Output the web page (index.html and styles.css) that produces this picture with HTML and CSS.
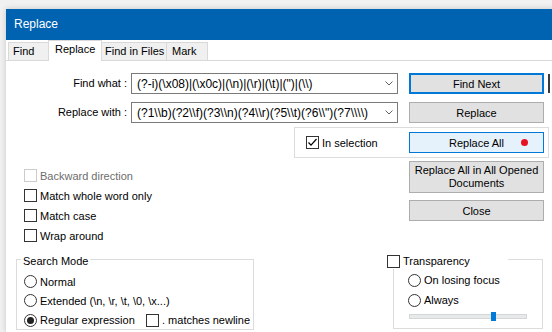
FILE: index.html
```html
<!DOCTYPE html>
<html lang="en">
<head>
<meta charset="UTF-8" />
<meta name="viewport" content="width=device-width, initial-scale=1" />
<title>Replace</title>
<link rel="stylesheet" href="styles.css">
</head>
<body>

<div class="window">
  <div class="titlebar">Replace</div>

  <div class="tabs">
    <div class="tab tab-find">Find</div>
    <div class="tab tab-replace active">Replace</div>
    <div class="tab tab-files">Find in Files</div>
    <div class="tab tab-mark">Mark</div>
  </div>

  <div class="panel">
    <div class="row">
      <span class="label">Find what :</span>
      <div class="combo">
        <span class="combo-text">(?-i)(\x08)|(\x0c)|(\n)|(\r)|(\t)|(")|(\\)</span>
        <svg class="chevron" viewBox="0 0 8 5"><polyline points="0.5,0.5 4,4 7.5,0.5" /></svg>
      </div>
      <button class="btn default">Find Next</button>
      <span class="swap"></span>
    </div>

    <div class="row row-second">
      <span class="label">Replace with :</span>
      <div class="combo">
        <span class="combo-text">(?1\\b)(?2\\f)(?3\\n)(?4\\r)(?5\\t)(?6\\")(?7\\\\)</span>
        <svg class="chevron" viewBox="0 0 8 5"><polyline points="0.5,0.5 4,4 7.5,0.5" /></svg>
      </div>
      <button class="btn">Replace</button>
    </div>

    <div class="selection-box">
      <label class="check in-selection">
        <span class="box"><svg viewBox="0 0 11 11"><polyline points="1.5,5.5 4,8.2 9.5,2" /></svg></span>
        In selection
      </label>
      <button class="btn hot">Replace All<span class="dot"></span></button>
    </div>

    <div class="middle">
      <div class="options">
        <label class="check disabled"><span class="box"></span>Backward direction</label>
        <label class="check"><span class="box"></span>Match whole word only</label>
        <label class="check"><span class="box"></span>Match case</label>
        <label class="check"><span class="box"></span>Wrap around</label>
      </div>
      <div class="actions">
        <button class="btn tall">Replace All in All Opened<br>Documents</button>
        <button class="btn">Close</button>
      </div>
    </div>

    <div class="bottom">
      <div class="group search-mode">
        <span class="group-title">Search Mode</span>
        <label class="radio"><span class="circle"></span>Normal</label>
        <label class="radio"><span class="circle"></span>Extended (\n, \r, \t, \0, \x...)</label>
        <div class="radio-line">
          <label class="radio regex"><span class="circle on"></span>Regular expression</label>
          <label class="check"><span class="box"></span>. matches newline</label>
        </div>
      </div>

      <div class="group transparency">
        <label class="check group-title trans-title"><span class="box"></span>Transparency</label>
        <label class="radio"><span class="circle"></span>On losing focus</label>
        <label class="radio"><span class="circle"></span>Always</label>
        <div class="slider"><span class="thumb"></span></div>
      </div>
    </div>
  </div>
</div>

</body>
</html>
```

FILE: styles.css
```css
body {
  margin: 0;
  background: #f1f1f1;
  font-family: "Liberation Sans", Arial, sans-serif;
  font-size: 11px;
  color: #000;
  overflow: hidden;
}
.window {
  margin: 9px 0 0 6px;
  width: 560px;
  height: 323px;
  overflow: hidden;
  background: #fff;
  box-shadow: 0 0 6px rgba(0,0,0,0.18);
}
.titlebar {
  height: 31px;
  line-height: 31px;
  padding-left: 8px;
  background: #0063b1;
  color: #fff;
  font-size: 12px;
}

/* tabs */
.tabs {
  display: flex;
  align-items: flex-end;
  height: 21px;
  box-sizing: border-box;
  padding-left: 3px;
  border-bottom: 1px solid #d9d9d9;
}
.tab {
  height: 18px;
  box-sizing: border-box;
  margin-left: -1px;
  padding-left: 4px;
  border: 1px solid #d9d9d9;
  border-bottom: none;
  background: #f0f0f0;
  line-height: 17px;
}
.tab-find { width: 41px; }
.tab-replace { width: 54px; padding-left: 6px; }
.tab-files { width: 66px; padding-left: 3px; }
.tab-mark { width: 42px; padding-left: 5px; }
.tab.active {
  position: relative;
  z-index: 1;
  height: 21px;
  margin-bottom: -1px;
  background: #fff;
}

/* main area */
.panel {
  padding-top: 12px;
}
.row {
  display: flex;
  align-items: flex-start;
  height: 21px;
}
.row-second {
  margin-top: 8px;
}
.label {
  width: 121px;
  margin-right: 4px;
  text-align: right;
  line-height: 21px;
  white-space: nowrap;
}
.combo {
  display: flex;
  align-items: center;
  width: 267px;
  height: 21px;
  box-sizing: border-box;
  padding-left: 5px;
  border: 1px solid #7a7a7a;
  overflow: hidden;
}
.combo-text {
  flex: 1;
  font-size: 12px;
  white-space: nowrap;
  overflow: hidden;
}
.chevron {
  flex: none;
  width: 8px;
  height: 5px;
  margin-right: 4px;
  fill: none;
  stroke: #606060;
  stroke-width: 1;
}
.btn {
  position: relative;
  width: 135px;
  height: 21px;
  box-sizing: border-box;
  margin: 0;
  padding: 0;
  font: inherit;
  color: #000;
  background: #e1e1e1;
  border: 1px solid #adadad;
}
.row .btn {
  margin-left: 11px;
}
.btn.default {
  border: 2px solid #0078d7;
}
.btn.hot {
  background: #e5f1fb;
  border-color: #0078d7;
}
.btn.tall {
  height: 32px;
  line-height: 13px;
}
.dot {
  position: absolute;
  right: 15px;
  top: 6px;
  width: 7px;
  height: 7px;
  border-radius: 50%;
  background: #e81123;
}
.swap {
  width: 14px;
  height: 19px;
  margin: 1px 0 0 4px;
  border-left: 2px solid #3a3a3a;
}

.selection-box {
  display: flex;
  align-items: center;
  width: 255px;
  height: 31px;
  box-sizing: border-box;
  margin: 4px 0 0 288px;
  padding-left: 11px;
  border: 1px solid #dcdcdc;
}
.in-selection {
  width: 103px;
}

/* checkboxes and radios */
.check,
.radio {
  display: flex;
  align-items: center;
  gap: 3px;
  height: 20px;
  white-space: nowrap;
}
.box,
.circle {
  display: flex;
  align-items: center;
  justify-content: center;
  flex: none;
  width: 13px;
  height: 13px;
  box-sizing: border-box;
  border: 1px solid #333;
  background: #fff;
}
.circle {
  border-radius: 50%;
}
.circle.on::after {
  content: "";
  width: 7px;
  height: 7px;
  border-radius: 50%;
  background: #222;
}
.box svg {
  width: 11px;
  height: 11px;
  fill: none;
  stroke: #000;
  stroke-width: 1.2;
}
.check.disabled {
  color: #6d6d6d;
}
.check.disabled .box {
  border-color: #cccccc;
}

.middle {
  display: flex;
  align-items: flex-start;
}
.options {
  width: 403px;
  box-sizing: border-box;
  margin-top: 8px;
  padding-left: 18px;
}
.options .check {
  align-items: flex-start;
  line-height: 20px;
}
.options .box {
  margin-top: 3px;
}
.actions {
  display: flex;
  flex-direction: column;
  gap: 7px;
  margin-top: 3px;
}

/* group boxes */
.bottom {
  display: flex;
  align-items: flex-start;
  margin-top: 13px;
}
.group {
  position: relative;
  box-sizing: border-box;
  border: 1px solid #dcdcdc;
}
.group-title {
  position: absolute;
  top: -7px;
  left: 4px;
  padding: 0 2px;
  height: 16px;
  line-height: 16px;
  background: #fff;
}
.search-mode {
  width: 238px;
  height: 71px;
  margin-left: 10px;
  padding: 12px 0 0 7px;
}
.search-mode .radio {
  height: 19px;
}
.radio-line {
  display: flex;
  align-items: center;
}
.regex {
  width: 122px;
}
.transparency {
  width: 150px;
  height: 70px;
  margin-left: 139px;
  padding: 10px 0 0 14px;
}
.trans-title {
  left: -7px;
  width: 121px;
  padding: 0;
}
.slider {
  position: relative;
  width: 118px;
  height: 5px;
  box-sizing: border-box;
  margin: 4px 0 0 1px;
  background: #e7eaea;
  border: 1px solid #d6d6d6;
}
.thumb {
  position: absolute;
  left: 81px;
  top: -3px;
  width: 5px;
  height: 9px;
  background: #007ad9;
}
```
